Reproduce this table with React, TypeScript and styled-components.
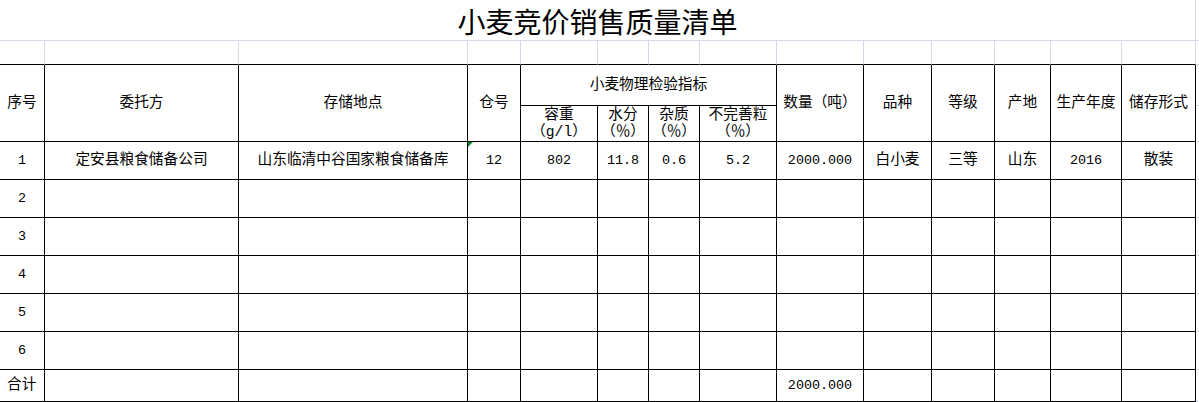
import styled, { createGlobalStyle } from "styled-components";

const GRID = "#d5dae6";
const LINE = "#000";

const GlobalStyle = createGlobalStyle`
	html, body {
		margin: 0;
		padding: 0;
		background: #fff;
	}
	body {
		font-family: "Liberation Mono", "Noto Sans CJK SC", monospace;
		color: #000;
	}
`;

const Sheet = styled.div`
	display: grid;
	grid-template-columns: 45px 194px 229px 53px 77px 51px 51px 77px 87px 68px 63px 56px 71px 74px 1fr;
	grid-template-rows: 41px 24px 41px 36px repeat(6, 38px) 32px;
	width: 1199px;
	overflow: hidden;
`;

const Title = styled.div`
	grid-column: span 14;
	display: flex;
	align-items: center;
	justify-content: center;
	box-sizing: border-box;
	border-bottom: 1px solid ${GRID};
	border-right: 1px solid ${GRID};
	font-family: "Noto Sans CJK SC", sans-serif;
	font-size: 28px;
	padding-top: 1px;
`;

const Filler = styled.div`
	box-sizing: border-box;
	border-bottom: 1px solid ${GRID};
`;

const Blank = styled.div`
	box-sizing: border-box;
	border-right: 1px solid ${GRID};
	border-bottom: 1px solid ${LINE};
`;

const Cell = styled.div<{
	$cols?: number;
	$rows?: number;
	$left?: boolean;
	$num?: boolean;
	$flag?: boolean;
}>`
	position: relative;
	grid-column: span ${(p) => p.$cols ?? 1};
	grid-row: span ${(p) => p.$rows ?? 1};
	display: flex;
	flex-direction: column;
	align-items: ${(p) => (p.$left ? "flex-start" : "center")};
	justify-content: center;
	box-sizing: border-box;
	border-right: 1px solid ${LINE};
	border-bottom: 1px solid ${LINE};
	padding-left: ${(p) => (p.$left ? "7px" : "0")};
	font-size: ${(p) => (p.$num ? "13.4px" : "14.7px")};
	line-height: 17px;
	white-space: nowrap;

	${(p) =>
		p.$flag &&
		`
		&::before {
			content: "";
			position: absolute;
			top: 0;
			left: 0;
			border-top: 5px solid #0a8a2a;
			border-right: 5px solid transparent;
		}
	`}
`;

const HEAD_TOP = ["序号", "委托方", "存储地点", "仓号"];
const HEAD_TAIL = ["数量（吨）", "品种", "等级", "产地", "生产年度", "储存形式"];
const HEAD_SUB: [string, string][] = [
	["容重", "（g/l）"],
	["水分", "（％）"],
	["杂质", "（％）"],
	["不完善粒", "（％）"],
];

const empty = (first: string) => [first, ...Array(13).fill("")];

const ROWS: string[][] = [
	[
		"1",
		"定安县粮食储备公司",
		"山东临清中谷国家粮食储备库",
		"12",
		"802",
		"11.8",
		"0.6",
		"5.2",
		"2000.000",
		"白小麦",
		"三等",
		"山东",
		"2016",
		"散装",
	],
	empty("2"),
	empty("3"),
	empty("4"),
	empty("5"),
	empty("6"),
];

const TOTAL = empty("合计");
TOTAL[8] = "2000.000";

const isNum = (s: string) => /^[\d.]+$/.test(s);

export default function App() {
	return (
		<>
			<GlobalStyle />
			<Sheet>
				<Title>小麦竞价销售质量清单</Title>
				<Filler />

				{Array.from({ length: 14 }).map((_, i) => (
					<Blank key={`b${i}`} />
				))}
				<Filler />

				{HEAD_TOP.map((h) => (
					<Cell key={h} $rows={2}>
						{h}
					</Cell>
				))}
				<Cell $cols={4}>小麦物理检验指标</Cell>
				{HEAD_TAIL.map((h) => (
					<Cell key={h} $rows={2}>
						{h}
					</Cell>
				))}
				<Filler />

				{HEAD_SUB.map(([a, b]) => (
					<Cell key={a}>
						<span>{a}</span>
						<span>{b}</span>
					</Cell>
				))}
				<Filler />

				{ROWS.map((row, r) => [
					...row.map((v, c) => (
						<Cell
							key={`${r}-${c}`}
							$num={isNum(v)}
							$flag={r === 0 && c === 3}
						>
							{v}
						</Cell>
					)),
					<Filler key={`f${r}`} />,
				])}

				{TOTAL.map((v, c) => (
					<Cell key={`t${c}`} $left={c === 0} $num={isNum(v)}>
						{v}
					</Cell>
				))}
				<Filler />
			</Sheet>
		</>
	);
}
